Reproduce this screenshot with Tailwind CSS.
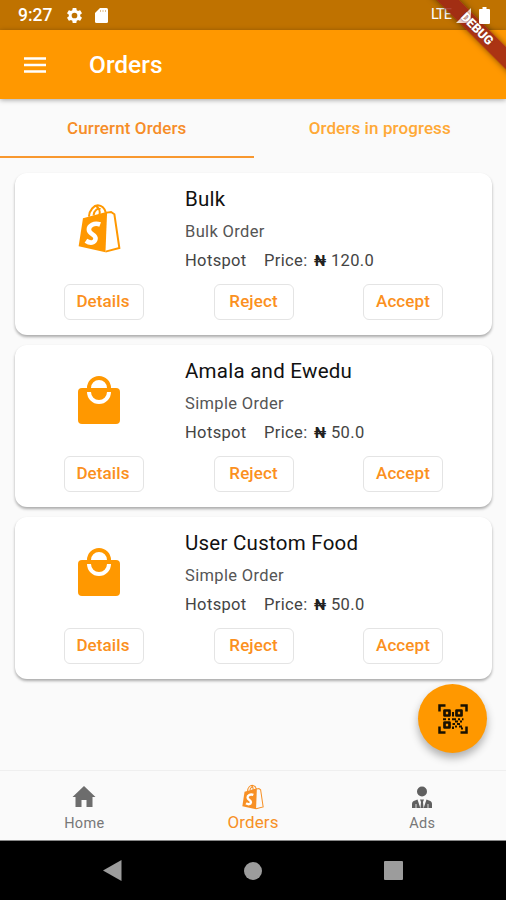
<!DOCTYPE html>
<html lang="en">
<head>
<meta charset="utf-8">
<title>Orders</title>
<script src="https://cdn.jsdelivr.net/npm/@tailwindcss/browser@4"></script>
</head>
<body class="w-[506px] h-[900px] overflow-hidden bg-[#fafafa] font-['Roboto','Noto_Sans',sans-serif] relative">
<svg class="hidden">
  <symbol id="shop" viewBox="232 116 130 148">
    <path d="M247 159 320 139 315 262 234 244Z" fill="currentColor"/>
    <path d="M319 142 332 140 342 147 357 249 315 260M265 154C266 134 281 120 292 120C305 121 313 131 316 142M279 150C281 135 292 127 300 132M297 148C300 134 293 126 286 122" fill="none" stroke="currentColor" stroke-width="6"/>
    <path d="M299 178C281 171 264 181 265 194C266 208 287 208 285 221C283 234 269 236 256 227" fill="none" stroke="#fff" stroke-width="14"/>
  </symbol>
  <symbol id="bag" viewBox="0 0 44 50">
    <path d="M5 13H39Q43 13 43 17V45Q43 49 39 49H5Q1 49 1 45V17Q1 13 5 13Z" fill="currentColor"/>
    <path d="M12 13A10 10 0 0 1 32 13" fill="none" stroke="currentColor" stroke-width="4"/>
    <path d="M12 17A10 10 0 0 0 32 17" fill="none" stroke="#fff" stroke-width="4"/>
  </symbol>
</svg>
<div class="flex flex-col h-full">
  <div class="h-[30px] bg-[#bf7200] flex items-center pl-[18px] pr-4 text-white shrink-0">
    <span class="text-[17.5px] font-medium leading-none w-[35px] pt-[2px]">9:27</span>
    <svg class="ml-[12px] w-[19px] h-[19px]" viewBox="0 0 24 24" fill="currentColor"><path d="M19.14 12.94c.04-.3.06-.61.06-.94s-.02-.64-.07-.94l2.03-1.58a.49.49 0 0 0 .12-.61l-1.92-3.32a.49.49 0 0 0-.59-.22l-2.39.96a7 7 0 0 0-1.62-.94l-.36-2.54A.48.48 0 0 0 13.92 2.4h-3.84a.48.48 0 0 0-.47.41l-.36 2.54a7 7 0 0 0-1.62.94l-2.39-.96a.48.48 0 0 0-.59.22L2.74 8.87a.48.48 0 0 0 .12.61l2.03 1.58a6 6 0 0 0 0 1.88l-2.03 1.58a.49.49 0 0 0-.12.61l1.92 3.32c.12.22.37.29.59.22l2.39-.96c.5.38 1.03.7 1.62.94l.36 2.54c.05.24.24.41.48.41h3.84c.24 0 .44-.17.47-.41l.36-2.54a7 7 0 0 0 1.62-.94l2.39.96c.22.08.47 0 .59-.22l1.92-3.32a.48.48 0 0 0-.12-.61zM12 15.6a3.6 3.6 0 1 1 0-7.2 3.6 3.6 0 0 1 0 7.2"/></svg>
    <svg class="ml-[10px] w-[15px] h-[17px]" viewBox="0 0 15 17"><path d="M6 1H12.500Q14 1 14 2.500V14.500Q14 16 12.500 16H2.500Q1 16 1 14.500V6Z" fill="#fff"/><path d="M6.500 3V5M9 3V5M11.500 3V5" stroke="#bf7200" stroke-opacity=".45"/></svg>
    <span class="ml-auto text-[14.500px] leading-none tracking-[-0.9px] w-[25px]">LTE</span>
    <svg class="w-[15px] h-[15px] mr-[8px] relative z-30" viewBox="0 0 15 15"><path d="M15 0V15H0Z" fill="#fff" fill-opacity=".8"/></svg>
    <svg class="w-[11px] h-[17px] relative z-30" viewBox="0 0 11 17"><path d="M3.500 0H7.500V2H10Q11 2 11 3V16Q11 17 10 17H1Q0 17 0 16V3Q0 2 1 2H3.500Z" fill="#fff"/></svg>
  </div>
  <header class="h-[69px] bg-[#ff9800] flex items-center pl-[24px] shrink-0 shadow-[0_1px_5px_rgba(0,0,0,0.35)] z-10 text-white">
    <svg class="w-[22px] h-[16px]" viewBox="0 0 22 16" stroke="#fff" stroke-width="2.600"><path d="M0 1.500H22M0 8H22M0 14.500H22"/></svg>
    <h1 class="ml-[43px] text-[24.500px] font-medium pt-[2px]">Orders</h1>
  </header>
  <div class="h-[59px] flex shrink-0 text-[#ff9800] font-medium text-[17px] text-center leading-[58px]">
    <div class="w-[253.500px] border-b-[2.500px] border-[#f8982f] text-[#f68d28] tracking-[0.1px]">Currernt Orders</div>
    <div class="flex-1 text-[#ffa936] tracking-[0.1px]">Orders in progress</div>
  </div>
  <main id="orders" class="pt-[15px] pl-[15px] pr-[14px] flex flex-col gap-[10px] flex-1"></main>
  <nav class="h-[71px] shrink-0 border-t border-[#efefef] border-b border-b-[#888] grid grid-cols-3 text-center text-[#777] text-[14.500px]">
    <div class="flex flex-col items-center pt-[14px]">
      <svg class="w-[24px] h-[23px]" viewBox="0 0 24 23" fill="#6d6d6d"><path d="M12 1 23.500 12H20.500V22H14.500V15H9.500V22H3.500V12H.5Z"/></svg>
      <span class="leading-[18px] mt-[7px] tracking-[0.3px]">Home</span>
    </div>
    <div class="flex flex-col items-center pt-[13px] text-[#f79025]">
      <svg class="w-[22px] h-[26px]"><use href="#shop"/></svg>
      <span class="leading-[20px] mt-[2px] text-[17px] tracking-[0.1px]">Orders</span>
    </div>
    <div class="flex flex-col items-center pt-[14px]">
      <svg class="w-[22px] h-[24px]" viewBox="0 0 22 24" fill="#606060"><circle cx="11" cy="6.500" r="5"/><path d="M1 23V19Q1 16 4 15.500L6.500 14.500 9.300 23ZM21 23V19Q21 16 18 15.500L15.500 14.500 12.700 23ZM9 14.500H13L12 17 12.500 23H9.500L10 17Z"/><path d="M5 19V23M17 19V23" stroke="#fafafa" stroke-width=".8"/></svg>
      <span class="leading-[18px] mt-[6px] tracking-[0.3px] pl-px">Ads</span>
    </div>
  </nav>
  <div class="h-[59px] bg-black shrink-0 flex items-center pl-[103px]">
    <svg class="w-[19px] h-[21px]" viewBox="0 0 19 21"><path d="M0 10.500 18.500 0V21Z" fill="#9c9c9c"/></svg>
    <div class="ml-[122px] size-[18px] rounded-full bg-[#9c9c9c]"></div>
    <div class="ml-[121.500px] size-[19px] rounded-[1px] bg-[#9c9c9c]"></div>
  </div>
</div>
<div class="absolute top-0 right-0 w-[80px] h-[80px] overflow-hidden z-20">
  <div class="absolute left-[-9px] top-[21px] w-[120px] h-[15.500px] rotate-45 bg-[#9c2216]/85 shadow-[0_0_6px_rgba(0,0,0,0.5)]"></div>
</div>
<div class="absolute top-0 right-0 w-[80px] h-[80px] overflow-hidden z-40">
  <div class="absolute left-[-9px] top-[21px] w-[120px] rotate-45 text-white text-[12.500px] leading-[16px] font-black text-center tracking-[-0.1px] [text-shadow:0_0_2px_#7a2a20]">DEBUG</div>
</div>
<button class="absolute left-[418px] top-[684px] size-[69px] rounded-full bg-[#ff9800] shadow-[0_5px_9px_rgba(0,0,0,0.3)] flex items-center justify-center">
  <svg class="w-[30px] h-[30px]" viewBox="0 0 30 30" fill="none" stroke="#191000" stroke-width="2.500">
    <path d="M1.500 7.500V1.500H7.500M22.500 1.500H28.500V7.500M28.500 22.500V28.500H22.500M7.500 28.500H1.500V22.500"/>
    <path d="M6.500 6.500H11.500V11.500H6.500ZM18.500 6.500H23.500V11.500H18.500ZM6.500 18.500H11.500V23.500H6.500Z" stroke-width="2.700" stroke-linejoin="round"/>
    <path d="M15 8V12.500M5 15.200H8M10 15.200H12M14 15.200H18M20 15.200H22M24 15.200H25.500M17 17.500H20M22 17.500H24M14.500 20H17M19 20H22M15 22.500V25M17 22.500H19M21 22.500H24M23 24.500H25" stroke-width="2"/>
  </svg>
</button>
<script>
const orders = [
  ['Bulk', 'Bulk Order', '120.0', 'shop'],
  ['Amala and Ewedu', 'Simple Order', '50.0', 'bag'],
  ['User Custom Food', 'Simple Order', '50.0', 'bag']
];
document.getElementById('orders').innerHTML = orders.map(([name, kind, price, icon]) => `
<article class="h-[162px] shrink-0 bg-white rounded-[12px] shadow-[0_2px_3px_rgba(0,0,0,0.32)] flex flex-col">
  <div class="flex h-[110px]">
    <div class="w-[170px] pt-[30px] flex justify-center pr-[2px]">
      <svg class="${icon === 'shop' ? 'w-[43px] h-[49px] ml-[1px] mt-[1px]' : 'w-[44px] h-[50px]'} text-[#ff9800]"><use href="#${icon}"/></svg>
    </div>
    <div class="text-[#555] text-[16.500px] tracking-[0.350px]">
      <h2 class="mt-[13px] text-[20.500px] leading-[26px] text-[#111] tracking-[0.250px]">${name}</h2>
      <p class="leading-[20px] mt-[10px]">${kind}</p>
      <p class="leading-[20px] mt-[9px] flex text-[#444]"><span class="w-[79px]">Hotspot</span><span class="w-[50px]">Price:</span><span class="w-[17px] font-bold text-[15px] text-[#222]">₦</span><span>${price}</span></p>
    </div>
  </div>
  <div class="flex justify-between pl-[49px] pr-[49px] mt-[1px] text-[#fb9020] font-medium text-[17px] tracking-[0.1px]">
    <button class="w-[80px] h-[36px] rounded-[6px] border border-[#e4e4e4] pr-[2px]">Details</button>
    <button class="w-[80px] h-[36px] rounded-[6px] border border-[#e4e4e4]">Reject</button>
    <button class="w-[80px] h-[36px] rounded-[6px] border border-[#e4e4e4]">Accept</button>
  </div>
</article>`).join('');
</script>
</body>
</html>
